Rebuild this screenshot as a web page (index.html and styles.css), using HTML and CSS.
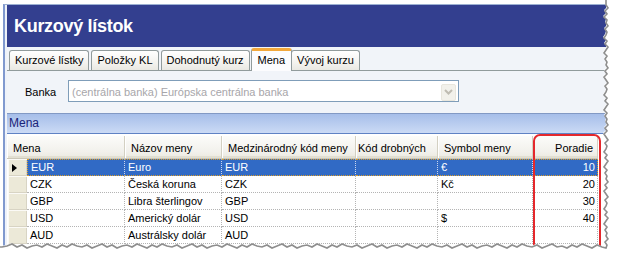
FILE: index.html
```html
<!DOCTYPE html>
<html lang="sk">
<head>
<meta charset="UTF-8">
<title>Kurzový lístok</title>
<link rel="stylesheet" href="styles.css">
</head>
<body>
<div class="window">
  <div class="title">Kurzový lístok</div>

  <div class="tabs">
    <div class="tab">Kurzové lístky</div>
    <div class="tab">Položky KL</div>
    <div class="tab">Dohodnutý kurz</div>
    <div class="tab active">Mena</div>
    <div class="tab">Vývoj kurzu</div>
  </div>

  <div class="panel">
    <span class="lbl">Banka</span>
    <div class="combo">
      <span>(centrálna banka) Európska centrálna banka</span>
      <span class="dropBtn">
        <svg width="9" height="6" viewBox="0 0 9 6"><path d="M1 1 L4.5 4.5 L8 1" fill="none" stroke="#bfbcb2" stroke-width="2"/></svg>
      </span>
    </div>
  </div>

  <div class="groupBar">Mena</div>

  <div class="grid">
    <div class="row head">
      <div class="hcell first">Mena</div>
      <div class="hcell">Názov meny</div>
      <div class="hcell">Medzinárodný kód meny</div>
      <div class="hcell small">Kód drobných</div>
      <div class="hcell">Symbol meny</div>
      <div class="hcell num">Poradie</div>
    </div>
    <div class="row sel">
      <div class="rh"><span class="arrow"></span></div>
      <div class="cell">EUR</div>
      <div class="cell">Euro</div>
      <div class="cell">EUR</div>
      <div class="cell"></div>
      <div class="cell">€</div>
      <div class="cell num">10</div>
    </div>
    <div class="row">
      <div class="rh"></div>
      <div class="cell">CZK</div>
      <div class="cell">Česká koruna</div>
      <div class="cell">CZK</div>
      <div class="cell"></div>
      <div class="cell">Kč</div>
      <div class="cell num">20</div>
    </div>
    <div class="row">
      <div class="rh"></div>
      <div class="cell">GBP</div>
      <div class="cell">Libra šterlingov</div>
      <div class="cell">GBP</div>
      <div class="cell"></div>
      <div class="cell"></div>
      <div class="cell num">30</div>
    </div>
    <div class="row">
      <div class="rh"></div>
      <div class="cell">USD</div>
      <div class="cell">Americký dolár</div>
      <div class="cell">USD</div>
      <div class="cell"></div>
      <div class="cell">$</div>
      <div class="cell num">40</div>
    </div>
    <div class="row">
      <div class="rh"></div>
      <div class="cell">AUD</div>
      <div class="cell">Austrálsky dolár</div>
      <div class="cell">AUD</div>
      <div class="cell"></div>
      <div class="cell"></div>
      <div class="cell num"></div>
    </div>
  </div>
</div>

<!-- red highlight round the Poradie column -->
<div class="mark"></div>

<!-- torn paper edge, right and bottom -->
<svg class="torn" width="618" height="256" viewBox="0 0 618 256">
  <defs>
    <filter id="soft" x="-5%" y="-5%" width="110%" height="110%"><feGaussianBlur stdDeviation="0.6"/></filter>
    <path id="edge" d="M640,-10 L605,-10 L605,4 L607,7 L604,10 L606,13 L603,16 L606,19 L605,22 L607,25 L604,28 L606,31 L605,34 L603,37 L606,40 L604,43 L607,46 L605,49 L603,52 L606,55 L604,58 L606,61 L605,64 L607,67 L604,70 L606,73 L603,76 L605,79 L607,82 L604,85 L606,88 L605,91 L603,94 L606,97 L604,100 L607,103 L605,106 L603,109 L606,112 L604,115 L606,118 L605,121 L607,124 L604,127 L606,130 L603,133 L605,136 L607,139 L604,142 L606,145 L605,148 L603,151 L606,154 L604,157 L607,160 L605,163 L603,166 L606,169 L604,172 L606,175 L605,178 L607,181 L604,184 L606,187 L603,190 L605,193 L607,196 L604,199 L606,202 L605,205 L603,208 L606,211 L604,214 L607,217 L605,220 L603,223 L606,226 L604,229 L606,232 L605,235 L607,238 L604,241 L606,244 L605,247 L601,246 L596,244 L591,247 L586,245 L581,243 L576,246 L571,244 L566,247 L561,245 L556,246 L551,243 L546,245 L541,247 L536,244 L531,246 L526,245 L521,243 L516,246 L511,244 L506,247 L501,245 L496,243 L491,246 L486,244 L481,245 L476,247 L471,244 L466,246 L461,243 L456,245 L451,247 L446,244 L441,246 L436,245 L431,243 L426,246 L421,244 L416,247 L411,245 L406,243 L401,246 L396,244 L391,245 L386,247 L381,244 L376,246 L371,243 L366,245 L361,247 L356,244 L351,246 L346,245 L341,243 L336,246 L331,244 L326,247 L321,245 L316,243 L311,246 L306,244 L301,245 L296,247 L291,244 L286,246 L281,243 L276,245 L271,247 L266,244 L261,246 L256,245 L251,243 L246,246 L241,244 L236,247 L231,245 L226,243 L221,246 L216,244 L211,245 L206,247 L201,244 L196,246 L191,243 L186,245 L181,247 L176,244 L171,246 L166,245 L161,243 L156,246 L151,244 L146,247 L141,245 L136,243 L131,246 L126,244 L121,245 L116,247 L111,244 L106,246 L101,243 L96,245 L91,247 L86,244 L81,246 L76,245 L71,243 L66,246 L61,244 L56,247 L51,245 L46,243 L41,246 L36,244 L31,245 L26,247 L21,244 L16,246 L11,243 L6,245 L1,246 L-10,246 L-10,280 L640,280 Z"/>
  </defs>
  <use href="#edge" fill="#fff"/>
  <use href="#edge" fill="none" stroke="#8e8e8e" stroke-width="1.6" filter="url(#soft)" transform="translate(1,1)"/>
</svg>
</body>
</html>
```

FILE: styles.css
```css
body {
  margin: 0;
  width: 618px;
  height: 256px;
  overflow: hidden;
  background: #fff;
  font-family: "Liberation Sans", Arial, sans-serif;
  font-size: 11px;
  color: #000;
}

.window {
  margin: 4px 0 0 3px;
  width: 603px;
  height: 250px;
  box-sizing: border-box;
  border-top: 1px solid #9cb0d2;
  border-left: 2px solid #8099cf;
  padding-left: 2px;
  background: #eef2f9;
  overflow: hidden;
}

/* Title bar */
.title {
  height: 42px;
  box-sizing: border-box;
  padding: 1px 0 0 7px;
  line-height: 41px;
  background: #333f8f;
  color: #fff;
  font-size: 18px;
  font-weight: bold;
  letter-spacing: -0.3px;
}

/* Tabs (XP style) */
.tabs {
  height: 24px;
  box-sizing: border-box;
  display: flex;
  align-items: flex-end;
  padding-left: 2px;
  background: #f1f4f9;
  border-bottom: 1px solid #919b9c;
}
.tab {
  height: 20px;
  box-sizing: border-box;
  padding: 0 5px;
  margin-right: 2px;
  line-height: 19px;
  border: 1px solid #919b9c;
  border-bottom: none;
  border-radius: 3px 3px 0 0;
  background: linear-gradient(#ffffff, #f4f3ef 60%, #e9e8e2);
  white-space: nowrap;
}
.tab.active {
  height: 23px;
  margin: 0 -1px -1px -1px;
  padding: 0 6px;
  line-height: 18px;
  border-top: 3px solid #f2a83c;
  background: #fcfcfe;
  position: relative;
}

/* Bank selector */
.panel {
  height: 42px;
  box-sizing: border-box;
  display: flex;
  align-items: flex-start;
  padding: 9px 0 0 18px;
  background: #f1f4f9;
}
.lbl {
  width: 43px;
  line-height: 24px;
}
.combo {
  width: 391px;
  height: 22px;
  box-sizing: border-box;
  display: flex;
  align-items: center;
  justify-content: space-between;
  padding: 2px 2px 0 3px;
  border: 1px solid #7f9db9;
  background: #fff;
  color: #a7a6aa;
}
.dropBtn {
  width: 15px;
  height: 17px;
  box-sizing: border-box;
  display: flex;
  align-items: center;
  justify-content: center;
  border: 1px solid #e8e6dd;
  border-radius: 2px;
  background: #f2f1eb;
}

/* Group caption */
.groupBar {
  height: 21px;
  box-sizing: border-box;
  padding-left: 2px;
  line-height: 19px;
  border-top: 1px solid #8299c4;
  border-bottom: 1px solid #5f82c4;
  background: linear-gradient(#a6bee9, #cbdaf5);
  color: #1a2479;
  font-size: 12px;
}

/* Grid */
.grid {
  height: 120px;
  padding-top: 2px;
  background: #fff;
}
.row {
  display: grid;
  grid-template-columns: 20px 98px 97px 134px 82px 95px 65px;
  height: 17px;
}
.row.head {
  height: 23px;
}
.hcell {
  box-sizing: border-box;
  padding: 3px 0 0 6px;
  line-height: 18px;
  border-right: 1px solid #d3d0c2;
  border-bottom: 1px solid #cbc7b8;
  background: linear-gradient(#fcfcfa, #f2f1ec 70%, #ebe9e0);
  box-shadow: inset 1px 0 #fff, inset 0 -2px #e2dfd2;
  white-space: nowrap;
}
.hcell.first {
  grid-column: span 2;
}
.hcell.small {
  padding-left: 2px;
}
.hcell.num {
  padding: 3px 4px 0 0;
  text-align: right;
}

.rh {
  margin-left: 1px;
  background: #ece9d8;
  box-shadow: inset 1px 1px #fbfaf6, inset -1px -1px #d8d4c4;
  display: flex;
  align-items: center;
  padding-left: 4px;
}
.arrow {
  width: 0;
  height: 0;
  border-left: 5px solid #000;
  border-top: 4.5px solid transparent;
  border-bottom: 4.5px solid transparent;
}
.cell {
  box-sizing: border-box;
  padding-left: 3px;
  line-height: 16px;
  border-right: 1px dotted #b4b4b4;
  border-bottom: 1px dotted #b4b4b4;
  white-space: nowrap;
  overflow: hidden;
}
.cell.num {
  padding: 0 2px 0 0;
  text-align: right;
}

/* selected row with focus rectangle */
.row.sel .cell {
  background: #316ac5;
  color: #fff;
  line-height: 15px;
  border-top: 1px dotted #d99c2b;
  border-bottom: 1px dotted #d99c2b;
  border-right-color: #c9d5ee;
}
.row.sel .cell:nth-child(2) {
  border-left: 1px dotted #d99c2b;
}
.row.sel .cell:last-child {
  border-right: 1px dotted #d99c2b;
}

/* Overlays */
.mark {
  position: absolute;
  left: 533px;
  top: 134px;
  width: 68px;
  height: 122px;
  box-sizing: border-box;
  border: 2px solid #e4282c;
  border-radius: 7px;
}
.torn {
  position: absolute;
  left: 0;
  top: 0;
}
```
